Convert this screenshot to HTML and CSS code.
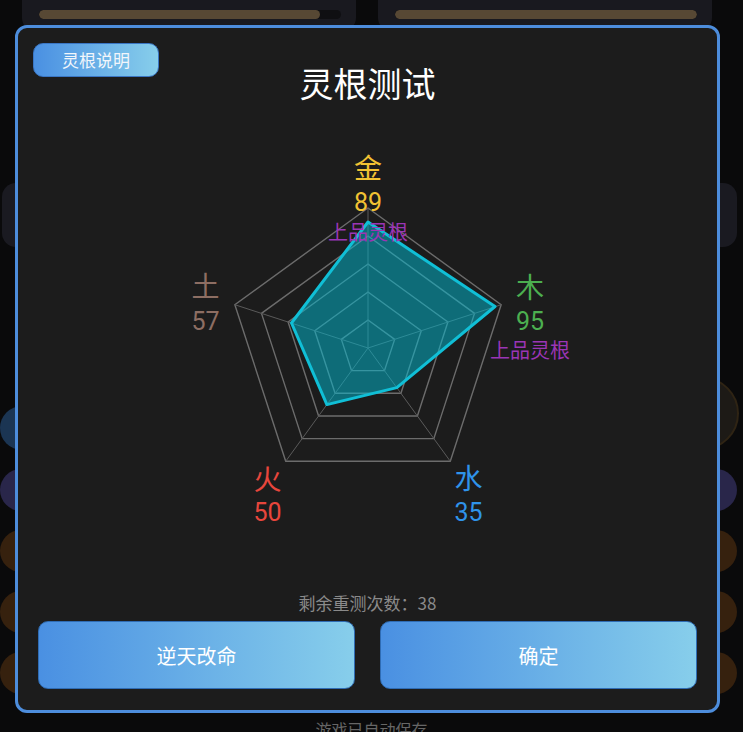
FILE: index.html
```html
<!DOCTYPE html>
<html lang="zh-CN">
<head>
<meta charset="utf-8">
<title>灵根测试</title>
<link rel="stylesheet" href="styles.css">
</head>
<body>
<div class="bg">
  <div class="top-row">
    <div class="top-card"><div class="bar"><div class="bar-fill" style="width:93%"></div></div></div>
    <div class="top-card"><div class="bar"><div class="bar-fill" style="width:100%"></div></div></div>
  </div>
  <div class="panel"></div>
  <div class="row-a">
    <div class="pill pill-blue"></div>
    <div class="avatar"></div>
  </div>
  <div class="pill-row"><div class="pill pill-purple"></div></div>
  <div class="pill-row"><div class="pill pill-brown"></div></div>
  <div class="pill-row"><div class="pill pill-brown"></div></div>
  <div class="pill-row"><div class="pill pill-brown"></div></div>
  <div class="save-note">游戏已自动保存</div>
</div>

<div class="modal">
  <button class="info-btn">灵根说明</button>
  <h1 class="title">灵根测试</h1>
  <svg class="radar" width="420" height="390" viewBox="-10 0 420 390">
    <polygon class="ring" points="200,68 333.15,164.74 282.29,321.26 117.71,321.26 66.85,164.74"/>
    <polygon class="ring" points="200,96 306.52,173.39 265.83,298.61 134.17,298.61 93.48,173.39"/>
    <polygon class="ring" points="200,124 279.89,182.04 249.38,275.96 150.62,275.96 120.11,182.04"/>
    <polygon class="ring" points="200,152 253.26,190.70 232.92,253.30 167.08,253.30 146.74,190.70"/>
    <polygon class="ring" points="200,180 226.63,199.35 216.46,230.65 183.54,230.65 173.37,199.35"/>
    <line class="spoke" x1="200" y1="208" x2="200" y2="68"/>
    <line class="spoke" x1="200" y1="208" x2="333.15" y2="164.74"/>
    <line class="spoke" x1="200" y1="208" x2="282.29" y2="321.26"/>
    <line class="spoke" x1="200" y1="208" x2="117.71" y2="321.26"/>
    <line class="spoke" x1="200" y1="208" x2="66.85" y2="164.74"/>
    <polygon class="area" points="200,82 327,166.5 228.8,247.6 158.9,264.6 123.5,183"/>
    <text class="lbl el jin" x="200" y="27">金</text>
    <text class="num jin" x="200" y="62">89</text>
    <text class="grade" x="200" y="91">上品灵根</text>
    <text class="lbl el mu" x="362" y="146">木</text>
    <text class="num mu" x="362" y="181">95</text>
    <text class="grade" x="362" y="209">上品灵根</text>
    <text class="lbl el tu" x="37.5" y="145">土</text>
    <text class="num tu" x="37.5" y="181">57</text>
    <text class="lbl el huo" x="99.5" y="338">火</text>
    <text class="num huo" x="99.5" y="372">50</text>
    <text class="lbl el shui" x="300.5" y="337">水</text>
    <text class="num shui" x="300.5" y="372">35</text>
  </svg>
  <div class="count">剩余重测次数：38</div>
  <div class="actions">
    <button class="big-btn">逆天改命</button>
    <button class="big-btn">确定</button>
  </div>
</div>
</body>
</html>
```
FILE: styles.css
```css
* { box-sizing: border-box; }
html, body {
  margin: 0;
  padding: 0;
  width: 743px;
  height: 732px;
  overflow: hidden;
  background: #0a0a0b;
  font-family: "Noto Sans CJK SC", "Noto Sans", sans-serif;
}
.bg {
  display: flex;
  flex-direction: column;
  width: 743px;
}
.top-row {
  display: flex;
  gap: 22px;
  padding: 0 31px 0 22px;
  height: 30px;
}
.top-card {
  flex: 1;
  background: #19191f;
  border-radius: 0 0 12px 12px;
  padding: 10px 15px 0 17px;
}
.bar {
  height: 9px;
  background: #0f0f12;
  border-radius: 5px;
  overflow: hidden;
}
.bar-fill {
  height: 100%;
  background: #574834;
  border-radius: 5px;
}
.panel {
  margin: 153px 6px 0 2px;
  height: 64px;
  border-radius: 14px;
  background: #1a1a21;
}
.row-a {
  display: flex;
  align-items: flex-end;
  justify-content: space-between;
  margin: 130px 4px 0 0;
  height: 73px;
}
.row-a .pill { width: 300px; }
.avatar {
  width: 73px;
  height: 73px;
  border-radius: 50%;
  background: #1d1a16;
  border: 2px solid #2f2414;
}
.pill-row {
  margin: 19px 6px 0 0;
  height: 42px;
  display: flex;
}
.pill {
  flex: 1;
  height: 44px;
  border-radius: 22px;
}
.pill-row .pill { height: 42px; border-radius: 21px; }
.pill-blue { background: #1b3553; flex: none; }
.pill-purple { background: #29264a; }
.pill-brown { background: #36210e; }
.save-note {
  margin-top: 24px;
  text-align: center;
  color: #666666;
  font-size: 16px;
  line-height: 22px;
}

.modal {
  position: absolute;
  left: 15px;
  top: 25px;
  width: 705px;
  height: 688px;
  background: #1c1c1c;
  border: 3px solid #4d8ddc;
  border-radius: 12px;
  padding: 35px 20px 21px;
  display: flex;
  flex-direction: column;
  align-items: center;
}
.info-btn {
  position: absolute;
  left: 15px;
  top: 15px;
  width: 126px;
  height: 34px;
  border-radius: 10px;
  border: 1px solid #3a76c4;
  background: linear-gradient(to right, #4a90e2, #87ceeb);
  color: #f2f6fb;
  font-family: "Noto Sans CJK SC", sans-serif;
  font-size: 17px;
  line-height: 32px;
  padding: 0;
}
.title {
  margin: 0;
  height: 40px;
  font-size: 34px;
  line-height: 40px;
  font-weight: 400;
  color: #ffffff;
}
.radar {
  display: block;
  margin-top: 37px;
  flex: none;
}
.ring {
  fill: none;
  stroke: #6c6c6c;
  stroke-width: 1.4;
}
.spoke {
  stroke: #5a5a5a;
  stroke-width: 1;
}
.area {
  fill: rgba(0, 188, 212, 0.5);
  stroke: #10bfd6;
  stroke-width: 3;
  stroke-linejoin: round;
}
.radar text {
  text-anchor: middle;
  dominant-baseline: central;
  font-family: "Noto Sans CJK SC", sans-serif;
}
.radar .lbl { font-size: 28px; }
.radar .num { font-size: 25px; font-family: Roboto, "Noto Sans", sans-serif; }
.radar .grade { font-size: 20px; fill: #9b35b5; }
.jin { fill: #f2c233; }
.mu { fill: #4caf50; }
.tu { fill: #8d6e63; }
.huo { fill: #e8463c; }
.shui { fill: #2f93ea; }
.count {
  margin-top: 62px;
  height: 22px;
  line-height: 22px;
  font-size: 17px;
  color: #8a8a8a;
}
.actions {
  margin-top: 7px;
  width: 100%;
  display: flex;
  gap: 25px;
}
.big-btn {
  flex: 1;
  height: 68px;
  border-radius: 10px;
  border: 1px solid #2f6cb4;
  background: linear-gradient(to right, #4a90e2, #87ceeb);
  color: #ffffff;
  font-family: "Noto Sans CJK SC", sans-serif;
  font-size: 20px;
  padding: 0;
}
```
